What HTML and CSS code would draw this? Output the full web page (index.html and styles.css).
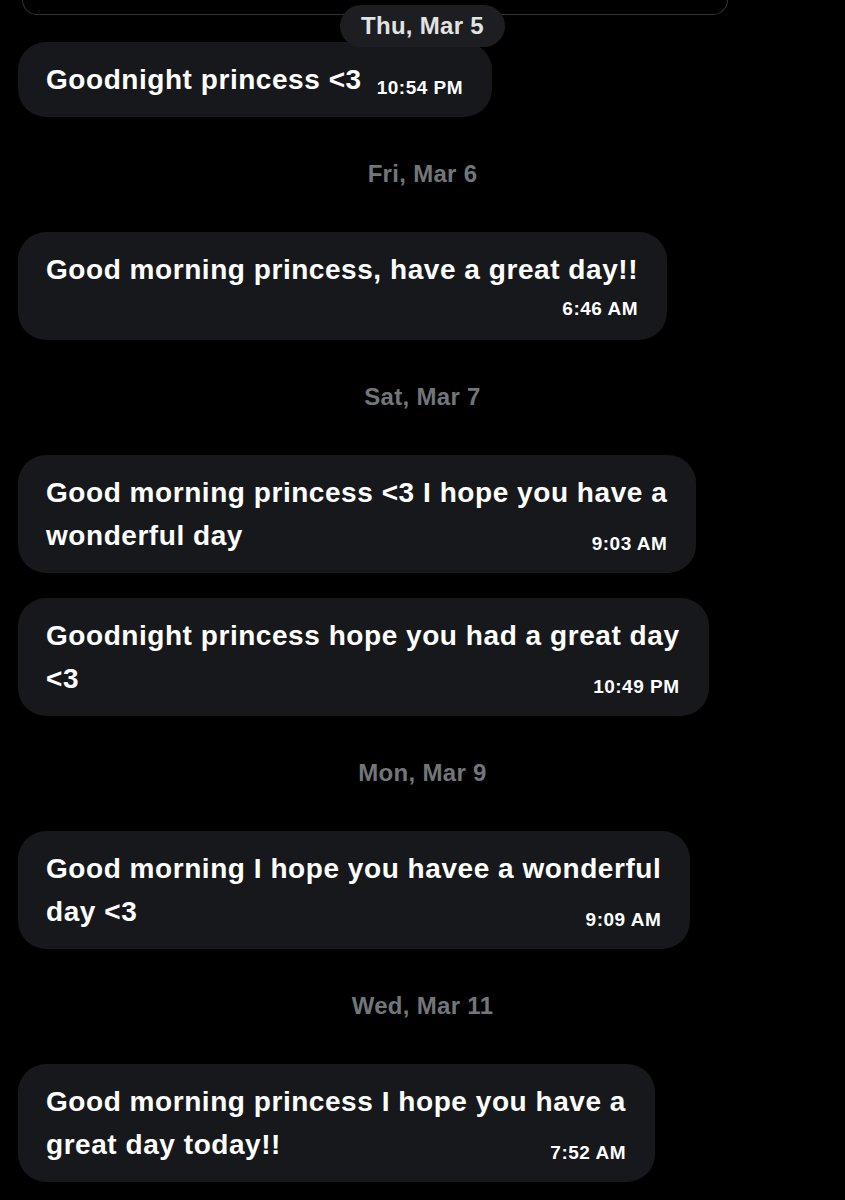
FILE: index.html
```html
<!DOCTYPE html>
<html lang="en">

<head>
    <meta charset="UTF-8">
    <meta name="viewport" content="width=device-width, initial-scale=1.0">
    <title>Messages</title>
    <link rel="stylesheet" href="styles.css">
</head>

<body>
    <div class="prev-card"></div>
    <div class="chat">
        <div class="day day-pill"><span>Thu, Mar 5</span></div>
        <div class="bubble first">
            Goodnight princess &lt;3<span class="time">10:54 PM</span>
        </div>

        <div class="day">Fri, Mar 6</div>
        <div class="bubble">
            Good morning princess, have a great day!!
            <div class="time below">6:46 AM</div>
        </div>

        <div class="day">Sat, Mar 7</div>
        <div class="bubble">
            Good morning princess &lt;3 I hope you have a<br>
            wonderful day<span class="time">9:03 AM</span>
        </div>
        <div class="bubble next">
            Goodnight princess hope you had a great day<br>
            &lt;3<span class="time">10:49 PM</span>
        </div>

        <div class="day">Mon, Mar 9</div>
        <div class="bubble">
            Good morning I hope you havee a wonderful<br>
            day &lt;3<span class="time">9:09 AM</span>
        </div>

        <div class="day">Wed, Mar 11</div>
        <div class="bubble">
            Good morning princess I hope you have a<br>
            great day today!!<span class="time">7:52 AM</span>
        </div>
    </div>
</body>

</html>
```

FILE: styles.css
```css
body {
    margin: 0;
    background: #000;
    color: #fff;
    font-family: "Liberation Sans", Arial, sans-serif;
    font-weight: 700;
}

/* bottom edge of the card scrolled off above */
.prev-card {
    height: 15px;
    margin: 0 117px 0 22px;
    border: 1px solid #2f3336;
    border-top: none;
    border-radius: 0 0 20px 20px;
    box-sizing: border-box;
}

.chat {
    display: flex;
    flex-direction: column;
    align-items: flex-start;
    padding-left: 18px;
    padding-right: 18px;
}

.day {
    align-self: stretch;
    text-align: center;
    color: #71767b;
    font-size: 24px;
    letter-spacing: 0.3px;
    line-height: 40px;
    padding: 37px 0 38px;
}

.day-pill {
    position: relative;
    z-index: 1;
    padding: 0;
    margin-top: -10px;
}

.day-pill span {
    display: inline-block;
    background: #1d1e21;
    color: #e1e3e4;
    height: 42px;
    line-height: 42px;
    padding: 0 21px;
    border-radius: 21px;
}

.bubble {
    background: #17181b;
    border-radius: 28px;
    padding: 16px 29px 16px 28px;
    font-size: 28px;
    letter-spacing: 0.55px;
    line-height: 43px;
}

.bubble.first {
    margin-top: -5px;
}

.bubble.next {
    margin-top: 25px;
}

.time {
    float: right;
    font-size: 19px;
    letter-spacing: 0.5px;
    line-height: 24px;
    margin: 18px 0 0 15px;
}

.time.below {
    float: none;
    line-height: 30px;
    margin: 3px 0 0;
    text-align: right;
}
```
